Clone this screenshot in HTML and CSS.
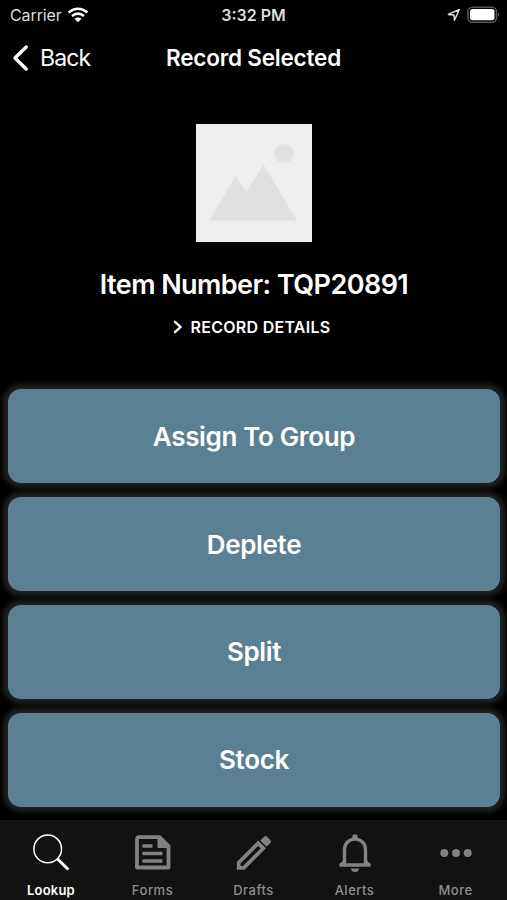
FILE: index.html
```html
<!DOCTYPE html>
<html lang="en">
<head>
<meta charset="utf-8">
<title>Record Selected</title>
<link rel="stylesheet" href="styles.css">
</head>
<body>
<div class="screen">
  <header class="status">
    <div class="carrier"><span>Carrier</span>
      <svg width="22" height="16" viewBox="0 0 22 16" fill="none" stroke="#fff" stroke-width="2.6"><path d="M1.6 5.5Q11 -2 20.4 5.5M5 9.1Q11 4.3 17 9.1"/><path d="M7.5 11.8Q11 9.1 14.5 11.8L11 15.3Z" fill="#fff" stroke="none"/></svg>
    </div>
    <span class="time">3:32 PM</span>
    <div class="indicators">
      <svg width="14" height="14" viewBox="0 0 14 14" fill="none" stroke="#ddd" stroke-width="1.5" stroke-linejoin="round"><path d="M1.3 6.4 12.3 1.5 7.5 12.3 7 7Z"/></svg>
      <svg width="34" height="18" viewBox="0 0 34 18"><rect x="1" y="1.2" width="28.5" height="15" rx="4.5" fill="#000" stroke="#555" stroke-width="1.6"/><rect x="3" y="3" width="24.5" height="11.2" rx="2.6" fill="#fff"/><path d="M31 6.5Q33 8.7 31 11Z" fill="#666"/></svg>
    </div>
  </header>
  <nav class="nav">
    <div class="back"><svg width="17" height="28" viewBox="0 0 17 28" fill="none" stroke="#fff" stroke-width="3.4" stroke-linecap="round" stroke-linejoin="round"><path d="M14.2 3 3 14 14.2 25"/></svg><span>Back</span></div>
    <h1>Record Selected</h1>
  </nav>
  <section class="record">
    <svg class="photo" width="116" height="118" viewBox="0 0 116 118"><rect width="116" height="118" fill="#eee"/><path d="M13.5 96.500 39.5 52 50.5 68 67.5 40.500 101 96.500Z" fill="#e0e0e0"/><circle cx="88" cy="29.5" r="9.5" fill="#e0e0e0"/></svg>
    <h2>Item Number: TQP20891</h2>
    <div class="details"><svg width="10" height="14" viewBox="0 0 10 14" fill="none" stroke="#fff" stroke-width="2.3" stroke-linecap="round"><path d="M2 1.8 7.5 7 2 12.2"/></svg><span>RECORD DETAILS</span></div>
  </section>
  <main class="actions">
    <div class="action"><span>Assign To Group</span></div>
    <div class="action"><span>Deplete</span></div>
    <div class="action"><span>Split</span></div>
    <div class="action"><span>Stock</span></div>
  </main>
  <footer class="tabs">
    <div class="tab active"><svg width="40" height="40" viewBox="0 0 40 40" fill="none" stroke="#fff"><circle cx="15.7" cy="15.9" r="13.8" stroke-width="1.5"/><path d="M25 25.500 36.300 36.500" stroke-width="3"/></svg><span>Lookup</span></div>
    <div class="tab"><svg width="40" height="40" viewBox="0 0 40 40" fill="none" stroke="#828282" stroke-width="3.8" stroke-linejoin="round"><path d="M6 4.2H26.500L35.500 13V34.5H4V6.2Q4 4.200 6 4.200Z"/><path d="M25.500 3.500V14H36Z" fill="#828282" stroke-width="2"/><path d="M9.500 13H19.500M9.500 20.500H29.500M9.500 28H29.500" stroke-width="3.400"/></svg><span>Forms</span></div>
    <div class="tab"><svg width="40" height="40" viewBox="0 0 40 40" fill="none" stroke="#828282" stroke-width="3.8"><path d="M4.700 29.700 24.200 10.200 29.300 15.300 9.800 34.800H4.700Z"/><path d="M26.300 7.500 30.300 3.500Q31.500 2.500 32.700 3.500L36.500 7.300Q37.500 8.500 36.500 9.700L32.500 13.700Z" fill="#828282" stroke="none"/></svg><span>Drafts</span></div>
    <div class="tab"><svg width="40" height="40" viewBox="0 0 40 40" fill="none" stroke="#828282" stroke-width="3.4"><path d="M4.500 32H35.500M9.500 32V17C9.500 2.500 30.500 2.500 30.500 17V32M20 6V3.500" /><circle cx="20" cy="4" r="2.700" fill="#828282" stroke="none"/><path d="M5 32.500 9.500 28M35 32.500 30.500 28" stroke-width="2.500"/><path d="M16 35.500H24Q23.500 39 20 39T16 35.500Z" fill="#828282" stroke="none"/></svg><span>Alerts</span></div>
    <div class="tab"><svg width="40" height="40" viewBox="0 0 40 40" fill="#828282"><circle cx="8.300" cy="20" r="4"/><circle cx="20" cy="20" r="4"/><circle cx="31.700" cy="20" r="4"/></svg><span>More</span></div>
  </footer>
</div>
</body>
</html>
```
FILE: styles.css
```css
* { box-sizing: border-box; }
body { margin: 0; background: #000; color: #fff; font-family: Inter, "Liberation Sans", sans-serif; }
svg { display: block; flex: none; }
h1, h2 { margin: 0; }
.screen { height: 900px; display: flex; flex-direction: column; overflow: hidden; }
.status { height: 30px; display: grid; grid-template-columns: 1fr auto 1fr; align-items: center; padding: 0 6px 0 10px; font-size: 16px; line-height: 30px; color: #ddd; }
.carrier { display: flex; align-items: center; gap: 5px; letter-spacing: -.1px; }
.time { font-weight: 600; padding-right: 4px; }
.indicators { display: flex; justify-content: flex-end; align-items: center; gap: 6px; }
.nav { height: 56px; display: grid; grid-template-columns: 1fr auto 1fr; align-items: center; padding: 0 12px; }
.back { display: flex; align-items: center; gap: 11px; font-size: 23px; letter-spacing: -.9px; }
.nav h1 { font-size: 22.500px; font-weight: 600; line-height: 28px; letter-spacing: -.2px; }
.record { height: 297px; flex: none; display: flex; flex-direction: column; align-items: center; padding-top: 38px; }
.record h2 { font-size: 27px; line-height: 34px; font-weight: 600; margin-top: 26px; padding-left: 1px; white-space: nowrap; letter-spacing: -.57px; }
.details { display: flex; align-items: center; gap: 8px; margin-top: 15px; font-size: 16px; line-height: 20px; font-weight: 600; padding-right: 4px; letter-spacing: .27px; }
.actions { flex: none; height: 437px; padding: 6px 7px 0 8px; display: flex; flex-direction: column; gap: 13.500px; }
.action { height: 94.400px; flex: none; border-radius: 13px; background: #5b7f93; box-shadow: 0 0 5px 5px #202120; display: flex; align-items: center; justify-content: center; font-size: 26px; font-weight: 600; letter-spacing: -.35px; }
.tabs { height: 80px; flex: none; background: #121212; position: relative; display: grid; grid-template-columns: repeat(5, 101px); justify-content: center; }
.tab { display: flex; flex-direction: column; align-items: center; padding-top: 13px; color: #8e8e8e; font-size: 13px; font-weight: 500; letter-spacing: .5px; line-height: 18px; }
.tab span { margin-top: 8px; }
.tab.active { color: #fff; font-weight: 600; letter-spacing: .2px; }
.tab.active span { padding-right: 1px; }
```
